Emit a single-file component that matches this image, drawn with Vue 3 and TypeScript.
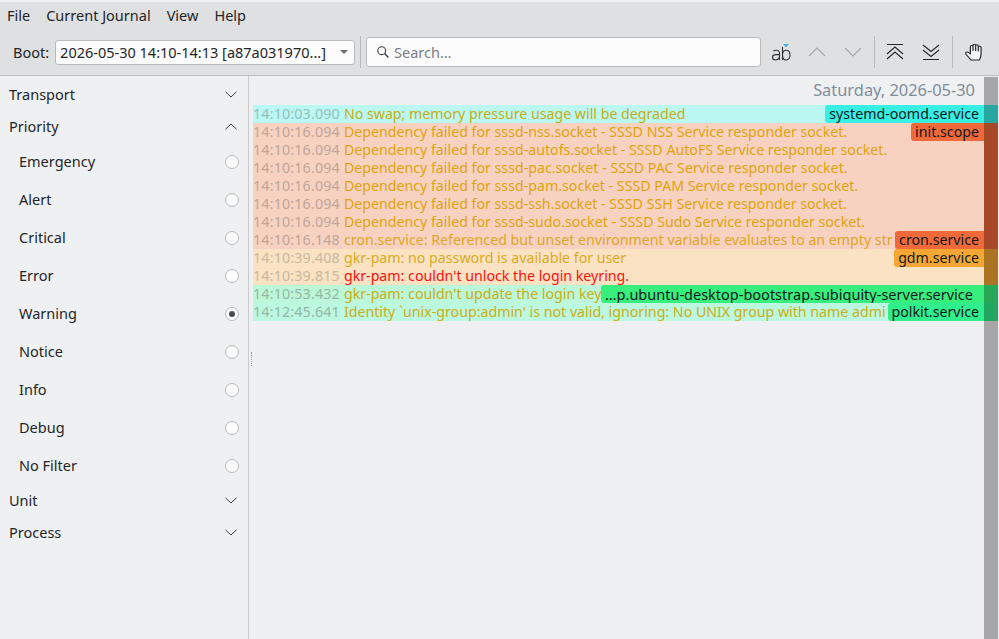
<script setup lang="ts">
interface Row {
  time: string
  text: string
  bg: string
  timeColor: string
  color: string
  stripe: string
  tag?: string
  long?: boolean
}

const filters = ['Emergency', 'Alert', 'Critical', 'Error', 'Warning', 'Notice', 'Info', 'Debug', 'No Filter']

const peach = '#f7d2c1'
const peachTime = '#c2a597'
const sand = '#fae2c2'
const sandTime = '#c6b9a0'
const mint = '#bbf7d8'
const mintTime = '#94b7a5'
const amber = '#e0a30e'
const orange = '#f0693a'
const gold = '#f5a633'

const rows: Row[] = [
  { time: '14:10:03.090', text: 'No swap; memory pressure usage will be degraded', bg: '#bcf8f3', timeColor: '#94c0bb', color: '#c4ae14', stripe: '#38efe4', tag: 'systemd-oomd.service' },
  { time: '14:10:16.094', text: 'Dependency failed for sssd-nss.socket - SSSD NSS Service responder socket.', bg: peach, timeColor: peachTime, color: amber, stripe: orange, tag: 'init.scope' },
  { time: '14:10:16.094', text: 'Dependency failed for sssd-autofs.socket - SSSD AutoFS Service responder socket.', bg: peach, timeColor: peachTime, color: amber, stripe: orange },
  { time: '14:10:16.094', text: 'Dependency failed for sssd-pac.socket - SSSD PAC Service responder socket.', bg: peach, timeColor: peachTime, color: amber, stripe: orange },
  { time: '14:10:16.094', text: 'Dependency failed for sssd-pam.socket - SSSD PAM Service responder socket.', bg: peach, timeColor: peachTime, color: amber, stripe: orange },
  { time: '14:10:16.094', text: 'Dependency failed for sssd-ssh.socket - SSSD SSH Service responder socket.', bg: peach, timeColor: peachTime, color: amber, stripe: orange },
  { time: '14:10:16.094', text: 'Dependency failed for sssd-sudo.socket - SSSD Sudo Service responder socket.', bg: peach, timeColor: peachTime, color: amber, stripe: orange },
  { time: '14:10:16.148', text: 'cron.service: Referenced but unset environment variable evaluates to an empty str', bg: peach, timeColor: peachTime, color: '#dfa526', stripe: orange, tag: 'cron.service' },
  { time: '14:10:39.408', text: 'gkr-pam: no password is available for user', bg: sand, timeColor: sandTime, color: '#d9ab1d', stripe: gold, tag: 'gdm.service' },
  { time: '14:10:39.815', text: "gkr-pam: couldn't unlock the login keyring.", bg: sand, timeColor: sandTime, color: '#ff1010', stripe: gold },
  { time: '14:10:53.432', text: "gkr-pam: couldn't update the login key", bg: mint, timeColor: mintTime, color: '#c9ae18', stripe: '#38ef7d', tag: '…p.ubuntu-desktop-bootstrap.subiquity-server.service', long: true },
  { time: '14:12:45.641', text: "Identity `unix-group:admin' is not valid, ignoring: No UNIX group with name admi", bg: '#bcf8e0', timeColor: mintTime, color: '#c9ae18', stripe: '#30ee8c', tag: 'polkit.service' },
]
</script>

<template>
  <div class="window">
    <header class="top">
      <nav class="menu">
        <span>File</span>
        <span>Current Journal</span>
        <span>View</span>
        <span>Help</span>
      </nav>
      <div class="toolbar">
        <label class="boot-label">Boot:</label>
        <div class="combo">
          <span>2026-05-30 14:10-14:13 [a87a031970...]</span>
          <i class="combo-arrow"></i>
        </div>
        <div class="sep sep-search"></div>
        <div class="search">
          <svg width="14" height="14" viewBox="0 0 14 14" fill="none" stroke="#3a3d40" stroke-width="1.1">
            <circle cx="5.7" cy="5.7" r="3.9" />
            <path d="M8.6 8.6 12.4 12.4" stroke-width="1.4" />
          </svg>
          <span>Search…</span>
        </div>
        <button class="tool tool-ab">
          <svg width="22" height="24" viewBox="0 0 22 24" fill="none" stroke="#2e3134" stroke-width="1.1">
            <path d="M13 4h6l-3 3.200z" fill="#3daee9" stroke="none" />
            <path d="M3.400 11q1.200-.8 2.800-.8 3.300 0 3.300 3v6.800M9.500 14.600H6.200q-3.700 0-3.700 2.700 0 2.700 3 2.700 2.400 0 4-2.400" />
            <path d="M12.500 7v13M12.500 15q0-4.800 3.700-4.800 3.800 0 3.800 4.900T16.200 20q-3.700 0-3.700-5" />
          </svg>
        </button>
        <button class="tool">
          <svg width="18" height="12" viewBox="0 0 18 12" fill="none" stroke="#a3a6a9" stroke-width="1.1"><path d="M1 10 9 2l8 8" /></svg>
        </button>
        <button class="tool">
          <svg width="18" height="12" viewBox="0 0 18 12" fill="none" stroke="#a3a6a9" stroke-width="1.1"><path d="M1 2l8 8 8-8" /></svg>
        </button>
        <div class="sep"></div>
        <button class="tool">
          <svg width="18" height="18" viewBox="0 0 18 18" fill="none" stroke="#232629" stroke-width="1.1">
            <path d="M1 1.500h16M1 11 9 4l8 7M1 16 9 9l8 7" />
          </svg>
        </button>
        <button class="tool">
          <svg width="18" height="18" viewBox="0 0 18 18" fill="none" stroke="#232629" stroke-width="1.1">
            <path d="M1 2l8 6.500L17 2M1 7l8 6.500L17 7M1 16.500h16" />
          </svg>
        </button>
        <div class="sep"></div>
        <button class="tool">
          <svg width="18" height="18" viewBox="0 0 18 18" fill="#f4f4f4" stroke="#232629" stroke-width="1" stroke-linejoin="round">
            <path transform="translate(-.2 0) scale(1.2 1)" d="M6 17 2 11.500Q1 9.500 2.500 9 3.500 8.800 4.500 10L5.500 11V4Q5.500 2.500 6.600 2.500 7.700 2.500 7.700 4V7.500 2.500Q7.700 1.200 8.800 1.200 9.900 1.200 9.900 2.500V7.500 3Q9.900 1.800 11 1.800 12.100 1.800 12.100 3V8 4.500Q12.100 3.300 13.200 3.300 14.400 3.300 14.400 4.500V11Q14.400 14 13 17z" />
          </svg>
        </button>
      </div>
    </header>

    <div class="body">
      <aside class="side">
        <div class="group"><span>Transport</span>
          <svg class="chev" width="12" height="7" viewBox="0 0 12 7" fill="none" stroke="#3a3d40" stroke-width="1"><path d="M.5.800 6 6l5.500-5.200" /></svg>
        </div>
        <div class="group"><span>Priority</span>
          <svg class="chev" width="12" height="7" viewBox="0 0 12 7" fill="none" stroke="#3a3d40" stroke-width="1"><path d="M.5 6.200 6 1l5.500 5.200" /></svg>
        </div>
        <div v-for="f in filters" :key="f" class="filter">
          <span>{{ f }}</span>
          <i class="radio" :class="{ on: f === 'Warning' }"></i>
        </div>
        <div class="group"><span>Unit</span>
          <svg class="chev" width="12" height="7" viewBox="0 0 12 7" fill="none" stroke="#3a3d40" stroke-width="1"><path d="M.5.800 6 6l5.500-5.200" /></svg>
        </div>
        <div class="group"><span>Process</span>
          <svg class="chev" width="12" height="7" viewBox="0 0 12 7" fill="none" stroke="#3a3d40" stroke-width="1"><path d="M.5.800 6 6l5.500-5.200" /></svg>
        </div>
      </aside>

      <main class="log">
        <div class="grip"></div>
        <div class="date">Saturday, 2026-05-30</div>
        <div v-for="(r, i) in rows" :key="i" class="row" :style="{ background: r.bg }">
          <span class="time" :style="{ color: r.timeColor }">{{ r.time }}</span>
          <span class="msg" :style="{ color: r.color }">{{ r.text }}</span>
          <span v-if="r.tag" class="tag" :class="{ 'tag-long': r.long }" :style="{ background: r.stripe }">{{ r.tag }}</span>
          <span class="stripe" :style="{ background: r.stripe }"></span>
        </div>
        <div class="scroll"></div>
      </main>
    </div>
  </div>
</template>

<style>
html, body { margin: 0; padding: 0; }
</style>

<style scoped>
.window {
  width: 999px;
  height: 639px;
  overflow: hidden;
  display: flex;
  flex-direction: column;
  background: #eff0f2;
  color: #232629;
  font-family: "Noto Sans", "DejaVu Sans", sans-serif;
  font-size: 14.5px;
}

.top {
  height: 73px;
  margin-top: 2px;
  flex: none;
  background: #dfe0e2;
  border-bottom: 1px solid #bcbec0;
  display: flex;
  flex-direction: column;
}

.menu {
  display: flex;
  gap: 16px;
  height: 25px;
  align-items: center;
  padding-left: 7px;
}

.toolbar {
  display: flex;
  align-items: center;
  height: 36px;
  margin-top: 7px;
  padding-left: 13px;
}

.boot-label { margin-right: 6px; }

.combo {
  width: 300px;
  height: 25px;
  box-sizing: border-box;
  background: #fcfcfc;
  border: 1px solid #b8babc;
  border-radius: 3px;
  display: flex;
  align-items: center;
  justify-content: space-between;
  padding: 0 6px 0 4px;
  white-space: nowrap;
}

.combo-arrow {
  width: 0;
  height: 0;
  border-left: 4px solid transparent;
  border-right: 4px solid transparent;
  border-top: 4px solid #6a6d70;
}

.sep {
  width: 1px;
  height: 32px;
  background: #b8babc;
  margin: 0 2px 0 3px;
}

.sep-search { margin: 0 5px; }

.search {
  width: 395px;
  height: 30px;
  box-sizing: border-box;
  background: #fcfcfc;
  border: 1px solid #b8babc;
  border-radius: 3px;
  display: flex;
  align-items: center;
  gap: 4px;
  padding-left: 9px;
  color: #7b7d80;
}

.tool {
  width: 36px;
  height: 32px;
  padding: 0;
  border: 0;
  background: none;
  display: flex;
  align-items: center;
  justify-content: center;
}

.tool-ab { margin-left: 2px; }

.body {
  flex: 1;
  display: flex;
  min-height: 0;
}

.side {
  width: 249px;
  flex: none;
  box-sizing: border-box;
  border-right: 1px solid #c8cacc;
  padding-top: 2px;
}

.group {
  height: 32px;
  display: flex;
  align-items: center;
  justify-content: space-between;
  padding: 0 11px 0 9px;
}

.filter {
  height: 38px;
  display: flex;
  align-items: center;
  justify-content: space-between;
  padding: 0 9px 0 19px;
}

.chev { display: block; }

.radio {
  width: 12px;
  height: 12px;
  margin-top: 1px;
  border-radius: 50%;
  background: #fcfcfc;
  border: 1px solid #b4b6b8;
  position: relative;
}

.radio.on::after {
  content: '';
  position: absolute;
  left: 3px;
  top: 3px;
  width: 6px;
  height: 6px;
  border-radius: 50%;
  background: #4a4c50;
}

.log {
  flex: 1;
  position: relative;
  padding: 1px 0 0 4px;
  min-width: 0;
}

.date {
  height: 28px;
  line-height: 25px;
  text-align: right;
  padding-right: 24px;
  font-size: 16.4px;
  color: #7f8c9b;
}

.row {
  height: 18px;
  line-height: 18px;
  width: 745px;
  display: flex;
  overflow: hidden;
  white-space: nowrap;
  font-size: 14.2px;
}

.time {
  flex: none;
  font-size: 14.3px;
  letter-spacing: 0.15px;
  margin-right: 4px;
}

.msg {
  flex: 1;
  min-width: 0;
  overflow: hidden;
}

.tag {
  flex: none;
  height: 18px;
  padding: 0 5px 0 4px;
  border-radius: 3px 0 0 3px;
  color: #12181c;
}

.tag-long {
  font-size: 14.5px;
  padding: 0 11px 0 4px;
}

.stripe {
  flex: none;
  width: 14px;
}

.scroll {
  position: absolute;
  right: 1px;
  top: 1px;
  bottom: 0;
  width: 14px;
  background: rgba(0, 0, 0, 0.3);
}

.grip {
  position: absolute;
  left: 2px;
  top: 276px;
  width: 0;
  height: 14px;
  border-left: 1px dotted #9a9c9e;
}
</style>
